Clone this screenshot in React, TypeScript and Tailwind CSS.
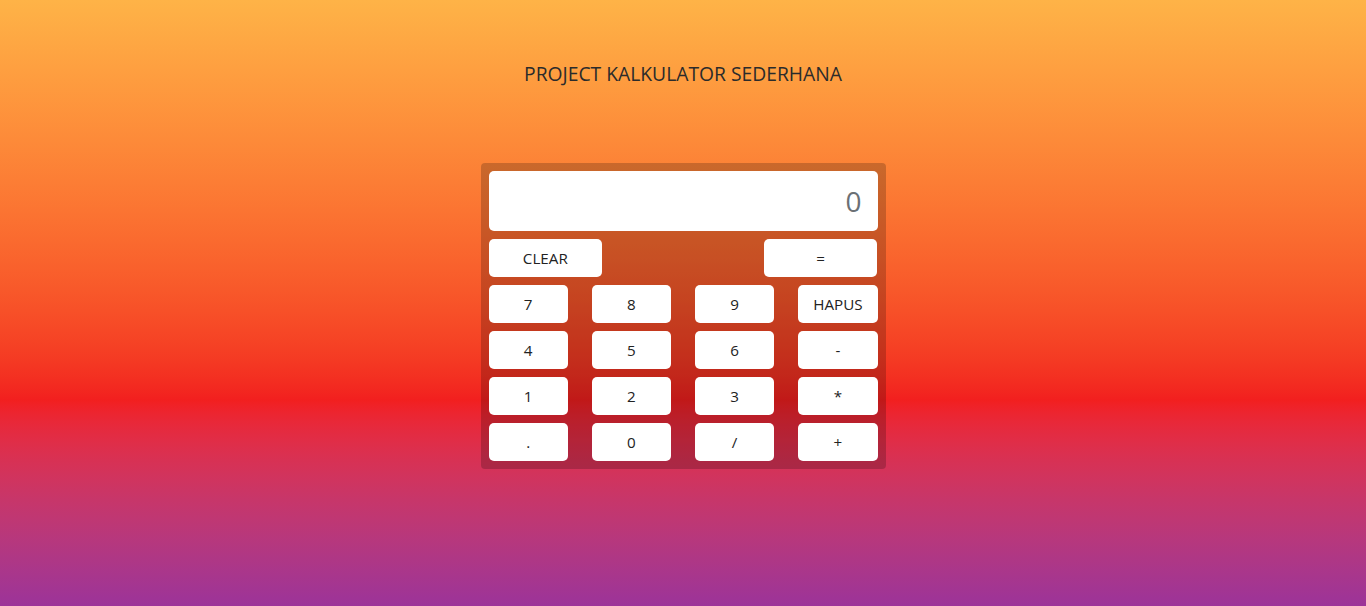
const App = () => {
  const keys = ["7", "8", "9", "HAPUS", "4", "5", "6", "-", "1", "2", "3", "*", ".", "0", "/", "+"];

  return (
    <div
      className="min-h-[606px] w-full bg-gradient-to-b from-[#feb347] via-[#f21f1f] via-66% to-[#9c3399] text-[#222] flex flex-col items-center"
      style={{ fontFamily: '"Open Sans", "Noto Sans", sans-serif' }}
    >
      <h1 className="mt-[60px] text-[19.3px] leading-[28px] text-[#2b2b2b]">PROJECT KALKULATOR SEDERHANA</h1>

      <div className="mt-[75px] w-[405px] rounded-[4px] bg-black/20 p-2">
        <div className="h-[60px] rounded-[5px] bg-white flex items-center justify-end pr-4 text-[28px] text-[#6b7075]">
          0
        </div>

        <div className="mt-2 grid grid-cols-3 gap-x-6">
          <button className="h-[38px] rounded-[5px] bg-white text-[15.2px]">CLEAR</button>
          <div />
          <button className="h-[38px] rounded-[5px] bg-white text-[15.2px]">=</button>
        </div>

        <div className="mt-2 grid grid-cols-4 gap-x-6 gap-y-2">
          {keys.map((k) => (
            <button key={k} className="h-[38px] rounded-[5px] bg-white text-[15.2px]">
              {k}
            </button>
          ))}
        </div>
      </div>
    </div>
  );
};

export default App;
